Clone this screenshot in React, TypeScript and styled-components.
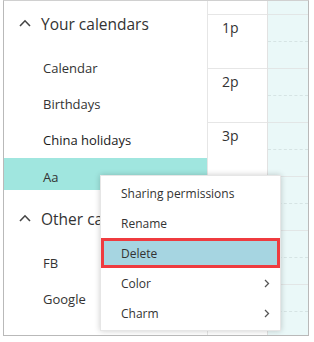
import styled, { createGlobalStyle } from 'styled-components';

const GlobalStyles = createGlobalStyle`
  html, body {
    margin: 0;
    padding: 0;
    background: #ffffff;
    font-family: "Segoe UI", "Open Sans", "Noto Sans", sans-serif;
    color: #333333;
  }
`;

const hours = ['1p', '2p', '3p', '4p', '5p', '6p'];

const menuItems = [
  { label: 'Sharing permissions' },
  { label: 'Rename' },
  { label: 'Delete', active: true },
  { label: 'Color', sub: true },
  { label: 'Charm', sub: true },
];

function ChevronUp() {
  return (
    <svg width="12" height="8" viewBox="0 0 12 8">
      <polyline points="1,7 6,1.8 11,7" fill="none" stroke="#444" strokeWidth="1.6" />
    </svg>
  );
}

function ChevronRight() {
  return (
    <svg width="6" height="9" viewBox="0 0 6 9">
      <polyline points="1,1 4.5,4.5 1,8" fill="none" stroke="#555" strokeWidth="1.3" />
    </svg>
  );
}

export default function App() {
  return (
    <>
      <GlobalStyles />
      <Frame>
        <Sidebar>
          <GroupHeader>
            <ChevronUp />
            <span>Your calendars</span>
          </GroupHeader>
          <Item>Calendar</Item>
          <Item>Birthdays</Item>
          <Item $dark>China holidays</Item>
          <Item $selected>Aa</Item>
          <GroupHeader $spaced>
            <ChevronUp />
            <span>Other calendars</span>
          </GroupHeader>
          <Item>FB</Item>
          <Item>Google</Item>
        </Sidebar>

        <TimeColumn>
          {hours.map((h) => (
            <HourSlot key={h}>
              <HourLabel>{h}</HourLabel>
            </HourSlot>
          ))}
        </TimeColumn>

        <DayColumn>
          {hours.map((h) => (
            <DaySlot key={h} />
          ))}
        </DayColumn>

        <Menu>
          {menuItems.map((m) => (
            <MenuItem key={m.label} $active={m.active}>
              <span>{m.label}</span>
              {m.sub && <ChevronRight />}
            </MenuItem>
          ))}
        </Menu>
      </Frame>
    </>
  );
}

const Frame = styled.div`
  position: relative;
  margin-left: 3px;
  width: 306px;
  height: 336px;
  box-sizing: border-box;
  border: 1px solid #b9b9b9;
  border-top-color: #d0d0d0;
  display: flex;
  overflow: hidden;
`;

const Sidebar = styled.div`
  width: 203px;
  flex-shrink: 0;
  display: flex;
  flex-direction: column;
`;

const GroupHeader = styled.div<{ $spaced?: boolean }>`
  display: flex;
  align-items: center;
  gap: 10px;
  height: 46px;
  margin-top: ${(p) => (p.$spaced ? '6px' : '0')};
  margin-bottom: 3px;
  padding-left: 15px;
  font-size: 15.5px;
  color: #333;
  white-space: nowrap;

  svg {
    margin-top: -2px;
  }
`;

const Item = styled.div<{ $selected?: boolean; $dark?: boolean }>`
  height: ${(p) => (p.$selected ? '32px' : '36px')};
  line-height: ${(p) => (p.$selected ? '38px' : '36px')};
  padding-left: 39px;
  font-size: 13px;
  color: ${(p) => (p.$dark ? '#1a1a1a' : '#333')};
  background: ${(p) => (p.$selected ? '#a0e6df' : 'transparent')};
`;

const TimeColumn = styled.div`
  width: 59px;
  flex-shrink: 0;
  border-left: 1px solid #e6e6e6;
  padding-top: 13px;
`;

const HourSlot = styled.div`
  height: 54px;
  box-sizing: border-box;
  border-top: 1px solid #e6e6e6;
  padding: 5px 0 0 14px;
`;

const HourLabel = styled.div`
  font-size: 14px;
  line-height: 16px;
  color: #333;
`;

const DayColumn = styled.div`
  flex: 1;
  background: #eaf8f8;
  border-left: 1px solid #e2e2e2;
  padding-top: 13px;
`;

const DaySlot = styled.div`
  height: 54px;
  box-sizing: border-box;
  border-top: 1px solid #e2e6e6;
  padding-top: 26px;

  &::after {
    content: '';
    display: block;
    border-top: 1px dashed #d6e4e4;
  }
`;

const Menu = styled.div`
  position: absolute;
  left: 96px;
  top: 174px;
  width: 181px;
  box-sizing: border-box;
  padding: 2px 0;
  background: #ffffff;
  border: 1px solid #e6e6e6;
  box-shadow: 0 0 6px rgba(0, 0, 0, 0.2);
`;

const MenuItem = styled.div<{ $active?: boolean }>`
  display: flex;
  align-items: center;
  justify-content: space-between;
  height: 30px;
  box-sizing: border-box;
  padding: 0 10px 0 20px;
  font-size: 12px;
  color: #333;
  background: ${(p) => (p.$active ? '#a6d5e1' : 'transparent')};
  border: ${(p) => (p.$active ? '3px solid #ef3b3f' : 'none')};
  padding-left: ${(p) => (p.$active ? '17px' : '20px')};
  padding-right: ${(p) => (p.$active ? '7px' : '10px')};
`;
